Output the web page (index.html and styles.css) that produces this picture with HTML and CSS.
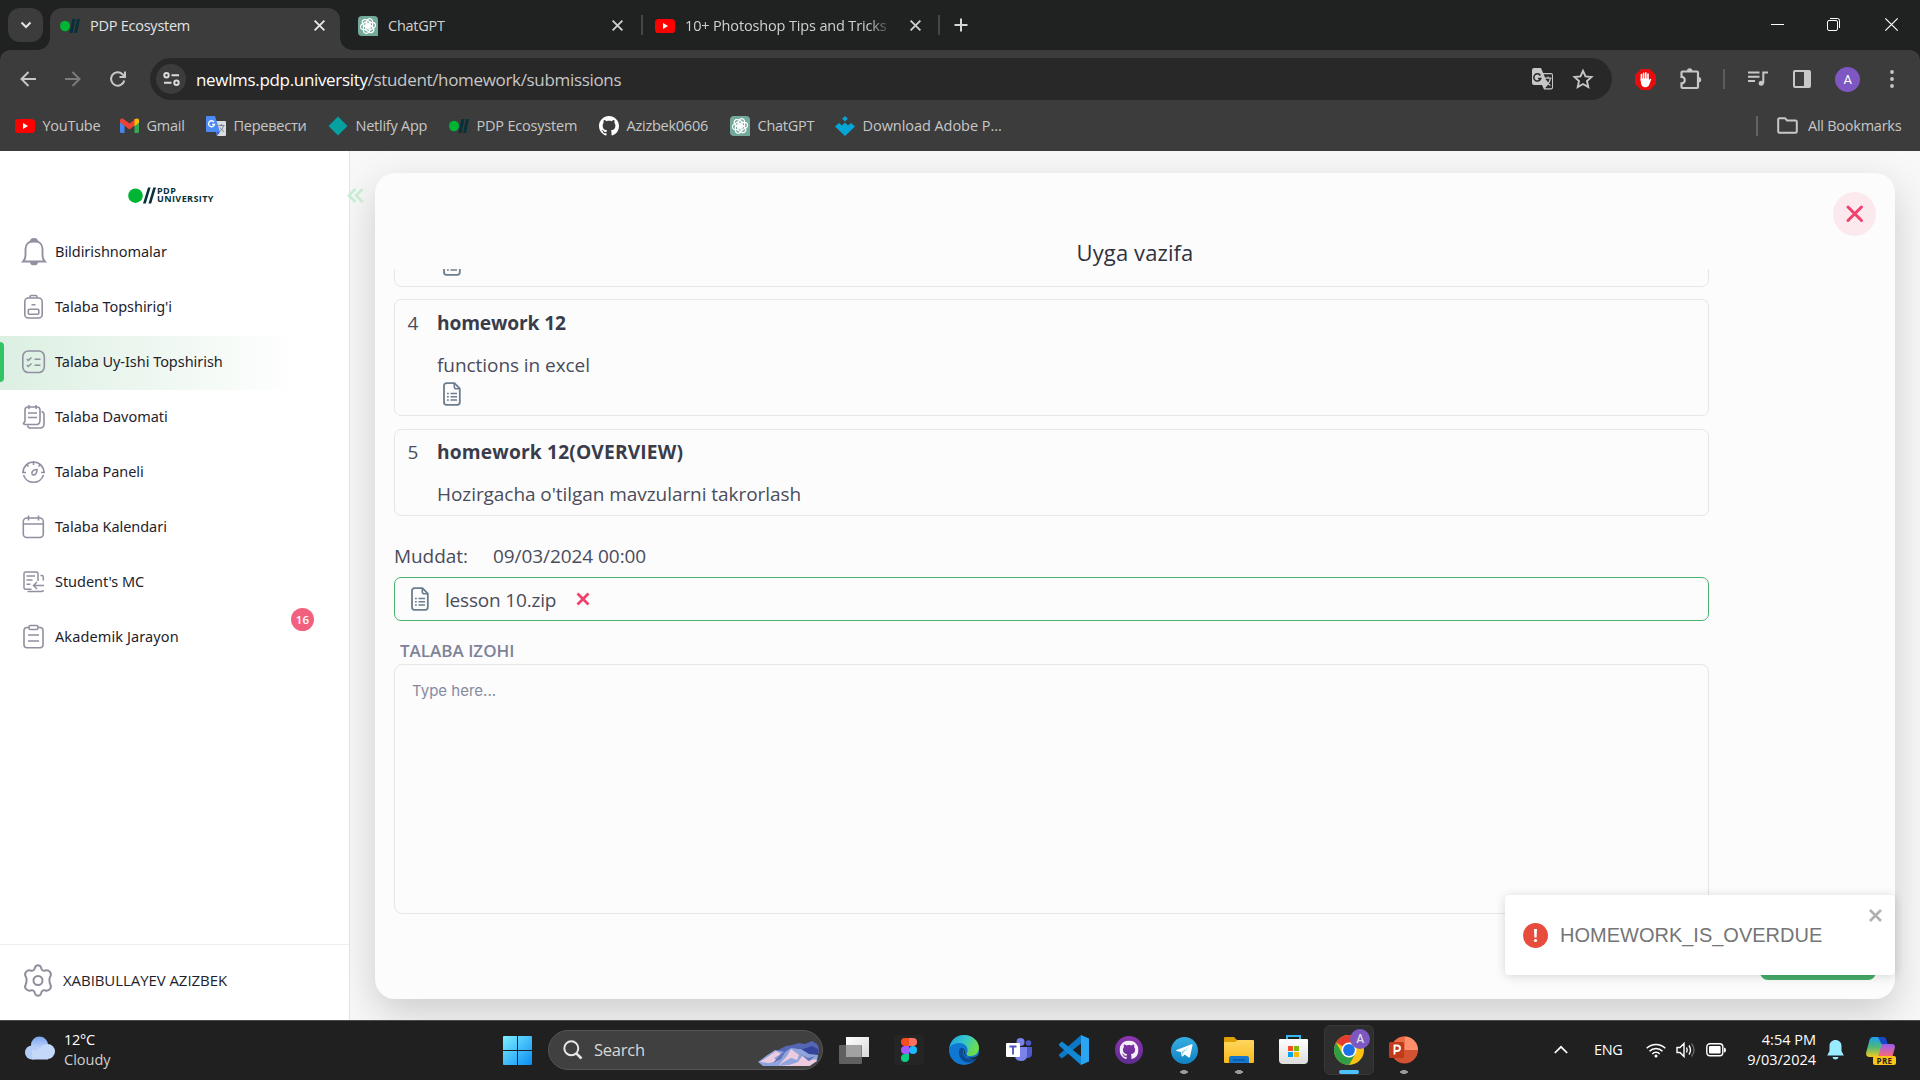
FILE: index.html
```html
<!DOCTYPE html>
<html lang="uz">
<head>
<meta charset="utf-8">
<title>PDP Ecosystem</title>
<link rel="stylesheet" href="styles.css">
</head>
<body>
<svg class="defs" width="0" height="0" aria-hidden="true">
  <defs>
    <linearGradient id="gStart" x1="0" y1="0" x2="1" y2="1"><stop offset="0" stop-color="#7df0ff"/><stop offset="1" stop-color="#0a8cf5"/></linearGradient>
    <linearGradient id="gCloud" x1="0" y1="0" x2="0" y2="1"><stop offset="0" stop-color="#7aa5f0"/><stop offset="1" stop-color="#dce9fc"/></linearGradient>
    <linearGradient id="gEdge" x1="0" y1="0" x2="1" y2="0.4"><stop offset="0" stop-color="#1b9de2"/><stop offset=".55" stop-color="#35c8c8"/><stop offset="1" stop-color="#6ddb4a"/></linearGradient>
    <linearGradient id="gFolder" x1="0" y1="0" x2="0" y2="1"><stop offset="0" stop-color="#ffd75e"/><stop offset="1" stop-color="#f7b81c"/></linearGradient>
    <linearGradient id="gTg" x1="0" y1="0" x2="0" y2="1"><stop offset="0" stop-color="#37aee2"/><stop offset="1" stop-color="#0f83c3"/></linearGradient>
    <linearGradient id="gGh" x1="0" y1="0" x2="0" y2="1"><stop offset="0" stop-color="#8d35b0"/><stop offset="1" stop-color="#5f2c8f"/></linearGradient>
    <linearGradient id="gBag" x1="0" y1="0" x2="0" y2="1"><stop offset="0" stop-color="#fff"/><stop offset="1" stop-color="#dcdcdc"/></linearGradient>
    <linearGradient id="gCopA" x1="0" y1="0" x2="0" y2="1"><stop offset="0" stop-color="#1aa0f0"/><stop offset=".5" stop-color="#4fb878"/><stop offset="1" stop-color="#f2cc20"/></linearGradient>
    <linearGradient id="gCopB" x1="0" y1="0" x2="0" y2="1"><stop offset="0" stop-color="#9a5cf0"/><stop offset="1" stop-color="#ff6a70"/></linearGradient>
    <linearGradient id="gTask" x1="0" y1="0" x2="1" y2="1"><stop offset="0" stop-color="#fff"/><stop offset="1" stop-color="#d8d8d8"/></linearGradient>
    <symbol id="pdp" viewBox="0 0 20 16"><ellipse cx="5" cy="8" rx="5" ry="5.2" fill="#00b533"/><path d="M9.5 15 12.5 1h3l-3 14zM14 15l3-14h3l-3 14z" fill="#06303a"/></symbol>
    <symbol id="gpt" viewBox="0 0 20 20"><path d="M4 0h12a4 4 0 0 1 4 4v16H4a4 4 0 0 1-4-4V4a4 4 0 0 1 4-4z" fill="#74aa9c"/><g fill="none" stroke="#fff" stroke-width="1.2"><path id="petal" d="M10 3.2c2-1.4 4.6.1 4.6 2.5v4.2l-3.3 1.9-3.2-1.9V6.2z"/><use href="#petal" transform="rotate(60 10 10)"/><use href="#petal" transform="rotate(120 10 10)"/><use href="#petal" transform="rotate(180 10 10)"/><use href="#petal" transform="rotate(240 10 10)"/><use href="#petal" transform="rotate(300 10 10)"/></g></symbol>
    <symbol id="yt" viewBox="0 0 20 14"><rect width="20" height="14" rx="3.6" fill="#f00"/><path d="M8 4v6l5-3z" fill="#fff"/></symbol>
    <symbol id="x" viewBox="0 0 12 12"><path d="M1.5 1.5l9 9m0-9l-9 9" fill="none" stroke="currentColor" stroke-width="1.7"/></symbol>
    <symbol id="octo" viewBox="0 0 16 16"><path d="M8 0C3.58 0 0 3.58 0 8c0 3.54 2.29 6.53 5.47 7.59.4.07.55-.17.55-.38 0-.19-.01-.82-.01-1.49-2.01.37-2.53-.49-2.69-.94-.09-.23-.48-.94-.82-1.13-.28-.15-.68-.52-.01-.53.63-.01 1.08.58 1.23.82.72 1.21 1.87.87 2.33.66.07-.52.28-.87.51-1.07-1.78-.2-3.64-.89-3.64-3.95 0-.87.31-1.59.82-2.15-.08-.2-.36-1.02.08-2.12 0 0 .67-.21 2.2.82.64-.18 1.32-.27 2-.27s1.36.09 2 .27c1.53-1.04 2.2-.82 2.2-.82.44 1.1.16 1.92.08 2.12.51.56.82 1.27.82 2.15 0 3.07-1.87 3.75-3.65 3.95.29.25.54.73.54 1.48 0 1.07-.01 1.93-.01 2.2 0 .21.15.46.55.38A8.01 8.01 0 0 0 16 8c0-4.42-3.58-8-8-8z"/></symbol>
    <symbol id="doc" viewBox="0 0 18 24"><path d="M3.5 1.2h8l5.3 5.3v13.8a2.5 2.5 0 0 1-2.5 2.5H3.5A2.5 2.5 0 0 1 1 20.300V3.700a2.500 2.500 0 0 1 2.500-2.500z" fill="none" stroke="#6b7d8e" stroke-width="1.800"/><path d="M11.300 1.500v3.300a2 2 0 0 0 2 2h3.200" fill="none" stroke="#6b7d8e" stroke-width="1.600"/><path d="M4 11.500h1.800M7.500 11.500h6.500M4 14.800h1.800M7.500 14.800h6.500M4 18h1.800M7.500 18h6.500" stroke="#6b7d8e" stroke-width="1.600"/></symbol>
  </defs>
</svg>

<header class="tabs">
  <button class="tab-search"><svg width="12" height="8" viewBox="0 0 12 8"><path d="M1.500 1.500 6 6l4.500-4.500" fill="none" stroke="#e3e3e3" stroke-width="2"/></svg></button>
  <div class="tab active"><svg width="20" height="16"><use href="#pdp"/></svg><span>PDP Ecosystem</span><svg class="tx" width="13" height="13"><use href="#x"/></svg></div>
  <div class="tab second"><svg width="20" height="20"><use href="#gpt"/></svg><span>ChatGPT</span><svg class="tx" width="13" height="13"><use href="#x"/></svg></div>
  <i class="tsep"></i>
  <div class="tab third"><svg width="20" height="14"><use href="#yt"/></svg><span class="fade">10+ Photoshop Tips and Tricks |</span><svg class="tx" width="13" height="13"><use href="#x"/></svg></div>
  <i class="tsep"></i>
  <svg class="plus" width="14" height="14" viewBox="0 0 14 14"><path d="M7 .5v13M.5 7h13" stroke="#d6d6d6" stroke-width="2"/></svg>
  <div class="winctl">
    <svg width="13" height="13" viewBox="0 0 13 13"><path d="M0 6.500h13" stroke="#fff"/></svg>
    <svg width="13" height="13" viewBox="0 0 13 13" fill="none" stroke="#fff"><rect x=".5" y="2.500" width="10" height="10" rx="1.500"/><path d="M3 .500h7.500a2 2 0 0 1 2 2V10"/></svg>
    <svg width="13" height="13" viewBox="0 0 13 13"><path d="M.3.3l12.400 12.400m0-12.400L.3 12.700" stroke="#fff" stroke-width="1.200"/></svg>
  </div>
</header>

<div class="toolbar">
  <nav class="navbtns">
    <svg width="16" height="16" viewBox="0 0 16 16" fill="none" stroke="#c7c7c7" stroke-width="2"><path d="M16 8H1.500M8.500 1 1.500 8l7 7"/></svg>
    <svg width="16" height="16" viewBox="0 0 16 16" fill="none" stroke="#7b7b7b" stroke-width="2"><path d="M0 8h14.500M7.500 1l7 7-7 7"/></svg>
    <svg width="16" height="16" viewBox="0 0 16 16" fill="none" stroke="#c7c7c7" stroke-width="2"><path d="M14.300 9.500A6.700 6.700 0 1 1 12.500 3.200L15 5.500M15 .5v5.500H9.500"/></svg>
  </nav>
  <div class="omni">
    <span class="chip"><svg width="17" height="14" viewBox="0 0 17 14" fill="none" stroke="#dcdcdc" stroke-width="2"><circle cx="3.500" cy="3.200" r="2.200"/><path d="M8.500 3.200H16M1 10.800h7.500"/><circle cx="13.500" cy="10.800" r="2.200"/></svg></span>
    <span class="url">newlms.pdp.university<em>/student/homework/submissions</em></span>
    <svg class="tr" width="22" height="22" viewBox="0 0 22 22"><path d="M2 0h7l2.200 5H19a2 2 0 0 1 2 2v12.500a2 2 0 0 1-2 2h-7L10 17H2a2 2 0 0 1-2-2V2a2 2 0 0 1 2-2z" fill="#c7c7c7"/><path d="M11.700 6.200H19q1 0 1 1v12q0 1-1 1h-6l3-3.400z" fill="#2a2a2a"/><path d="M8.400 7.500a3.600 3.600 0 1 0 .4 3H6" fill="none" stroke="#282828" stroke-width="1.500"/><path d="M12.500 10.200h7M16 8.500v1.700M13.500 17.500c3-1.500 4.500-4 4.800-7.300M14 12.500c.8 2 2.500 4 4.500 5" fill="none" stroke="#c7c7c7" stroke-width="1.300"/></svg>
    <svg class="star" width="20" height="20" viewBox="0 0 20 20"><path d="M10 1.800l2.500 5.600 6 .6-4.500 4.100 1.300 6L10 15l-5.300 3.100 1.300-6L1.500 8l6-.6z" fill="none" stroke="#c7c7c7" stroke-width="1.900"/></svg>
  </div>
  <div class="exts">
    <svg width="21" height="21" viewBox="0 0 21 21"><path d="M6.200 0h8.600L21 6.200v8.600L14.800 21H6.200L0 14.800V6.200z" fill="#e80c0c"/><path d="M6.400 5.500v6M8.600 4.200v7M10.800 3.800v7M13 5v7" stroke="#fff" stroke-width="1.600" stroke-linecap="round"/><path d="M5.600 9.500h8.200v2.300l1-1.800q1-.7 1.500.2L14.500 15q-1 3.200-4.200 3.200-3.600 0-4.300-3.700z" fill="#fff"/></svg>
    <svg class="puz" width="22" height="22" viewBox="0 0 22 22"><path d="M2.500 3.500H17a1 1 0 0 1 1 1V19a1 1 0 0 1-1 1H2.500a1 1 0 0 1-1-1v-3.600a3.300 3.300 0 0 0 0-6.600V4.500a1 1 0 0 1 1-1z" fill="none" stroke="#c7c7c7" stroke-width="2.200"/><path d="M7 3a2.700 2.700 0 0 1 5.400 0zM18.500 9a2.700 2.700 0 0 1 0 5.400z" fill="#c7c7c7"/></svg>
    <i class="vsep"></i>
    <svg class="mus" width="20" height="16" viewBox="0 0 20 16" fill="none" stroke="#c7c7c7" stroke-width="2"><path d="M0 1.500h11.500M0 5.700h11.500M0 9.900h7M15.300 12.300V1.500H20"/><circle cx="13.200" cy="12.300" r="2.500" fill="#c7c7c7" stroke="none"/></svg>
    <svg class="side" width="18" height="18" viewBox="0 0 18 18"><rect x="1" y="1" width="16" height="16" rx="1" fill="none" stroke="#c7c7c7" stroke-width="2"/><path d="M11 1h6v16h-6z" fill="#c7c7c7"/></svg>
    <span class="avatar">A</span>
    <svg class="dots" width="4" height="18" viewBox="0 0 4 18" fill="#c7c7c7"><circle cx="2" cy="2" r="1.900"/><circle cx="2" cy="9" r="1.900"/><circle cx="2" cy="16" r="1.900"/></svg>
  </div>
</div>

<div class="bookmarks">
  <a><svg width="20" height="14"><use href="#yt"/></svg>YouTube</a>
  <a><svg width="19" height="15" viewBox="0 0 19 15"><path d="M0 2v12a1 1 0 0 0 1 1h3.500V6z" fill="#4285f4"/><path d="M19 2v12a1 1 0 0 1-1 1h-3.500V6z" fill="#34a853"/><path d="M14.500 1.300 19 2v2.500L14.500 8z" fill="#fbbc04"/><path d="M0 2.500C0 .3 2 0 3.500 1l6 4.500 6-4.500-1 6.700-5 3.800-5-3.800L0 4.500z" fill="#ea4335"/><path d="M14.500 1.500C17-.5 19 .5 19 2.500v2L14.500 8z" fill="#fbbc04"/></svg>Gmail</a>
  <a><svg width="20" height="20" viewBox="0 0 20 20"><path d="M8 5h11a1 1 0 0 1 1 1v13a1 1 0 0 1-1 1h-8z" fill="#dadce0"/><path d="M1 0h8l5 16H1a1 1 0 0 1-1-1V1a1 1 0 0 1 1-1z" fill="#4c8bf5"/><path d="M11 20l3-4h-4z" fill="#3367d6"/><path d="M8 6a3 3 0 1 0 .5 2.300H6" fill="none" stroke="#fff" stroke-width="1.300"/><path d="M12.500 9.500h6M15.500 8v1.500M13.500 15.500c2-1 3.500-3 3.800-6M14 11.500c.8 1.500 2 3 4 4" fill="none" stroke="#7a8591"/></svg>Перевести</a>
  <a><svg width="20" height="20" viewBox="0 0 20 20"><path d="M10 .5 19.500 10 10 19.500.5 10z" fill="#05a0a0"/></svg>Netlify App</a>
  <a><svg width="20" height="16"><use href="#pdp"/></svg>PDP Ecosystem</a>
  <a><svg width="20" height="20" fill="#fff"><use href="#octo"/></svg>Azizbek0606</a>
  <a><svg width="20" height="20"><use href="#gpt"/></svg>ChatGPT</a>
  <a><svg width="20" height="20" viewBox="0 0 20 20" fill="#04a6d8"><path d="M10 0l2.800 2.800L10 5.600 7.200 2.800zM10 20 0 10.500 4 7l3 2.500 3-3 3 3L16 7l4 3.500z"/></svg>Download Adobe P...</a>
  <i class="bsep"></i>
  <a><svg width="21" height="17" viewBox="0 0 21 17"><path d="M2.500 1.200H8l2 2.300h8.500a1.300 1.300 0 0 1 1.300 1.300v9.700a1.300 1.300 0 0 1-1.300 1.300h-16a1.300 1.300 0 0 1-1.300-1.300v-12a1.300 1.300 0 0 1 1.300-1.300z" fill="none" stroke="#c7c7c7" stroke-width="2"/></svg>All Bookmarks</a>
</div>

<div class="app">
  <aside class="sidebar">
    <div class="logo"><svg width="28" height="17" viewBox="0 0 28 17"><circle cx="7.500" cy="8.700" r="7.300" fill="#00b533"/><path d="M15 16.500 20 .500h2.600l-4.800 16zM20.500 16.500l4.800-16H28l-4.800 16z" fill="#06303a"/></svg><b>PDP<br>UNIVERSITY</b></div>
    <ul class="menu">
      <li><svg width="24" height="28" viewBox="0 0 24 28" fill="none" stroke="#9090a0" stroke-width="1.900"><path d="M1.200 23.500c1.600-1.600 2.300-3.300 2.300-6V11C3.500 6 7 3 12 3s8.500 3 8.500 8v6.500c0 2.700.7 4.400 2.300 6z"/><path d="M9 3.500C9 .2 15 .2 15 3.500zM9 24.500h6c-.5 2.500-5.500 2.500-6 0z" fill="#9090a0"/></svg>Bildirishnomalar</li>
      <li><svg width="24" height="28" viewBox="0 0 24 28" fill="none" stroke="#9090a0" stroke-width="1.600"><rect x="2.800" y="5" width="17.400" height="20" rx="3.500"/><path d="M8 5V3.800q0-1.300 1.300-1.300h4.400Q15 2.500 15 3.800V5M9.500 11.800h4"/><rect x="6.300" y="16.300" width="10.500" height="5" rx="1"/></svg>Talaba Topshirig'i</li>
      <li class="current"><svg width="24" height="28" viewBox="0 0 24 28" fill="none" stroke="#9090a0" stroke-width="1.600"><rect x=".8" y="3" width="21.500" height="21.500" rx="5.500"/><path d="M12.500 11.300h6M12.500 17.300h6M4.800 11l1.500 1.500 3.200-3M4.800 17l1.500 1.500 3.200-3"/></svg>Talaba Uy-Ishi Topshirish</li>
      <li><svg width="24" height="28" viewBox="0 0 24 28" fill="none" stroke="#9090a0" stroke-width="1.600"><path d="M3 18V7q0-3 3-3h9q3 0 3 3v10c0 3-1 4.500-3.500 4.500h-11c-2.300 0-2.500-1.500-1.300-2z"/><path d="M7 2v4M14 2v4M6 10h9M6 14.500h9M19.500 8.500q2.500.5 2.500 3V21q0 4-4 4H8.500q-2.500 0-3-2.500"/></svg>Talaba Davomati</li>
      <li><svg width="24" height="28" viewBox="0 0 24 28" fill="none" stroke="#9090a0" stroke-width="1.600"><path d="M1 14.500a10.500 10.500 0 1 1 21 0M1.500 17a10.500 10.500 0 0 0 20 0M0 14.500h4M19 14.500h4M11.500 3v4M4.500 6.500l2 2M18.500 6.500l-2 2"/><path d="M15 11.500c-2.500 0-6 1.500-5 4.500 1 1.500 3 1 4-.5.700-1.200 1-2.500 1-4z"/></svg>Talaba Paneli</li>
      <li><svg width="24" height="28" viewBox="0 0 24 28" fill="none" stroke="#9090a0" stroke-width="1.600"><rect x="1.300" y="5" width="20" height="19.500" rx="3.500"/><path d="M1.500 11h20M6.500 2.500v5M16.500 2.500v5"/></svg>Talaba Kalendari</li>
      <li><svg width="24" height="28" viewBox="0 0 24 28" fill="none" stroke="#9090a0" stroke-width="1.500"><path d="M9.500 21.300H3.500q-1.500 0-1.500-1.500V5.500Q2 4 3.500 4h11Q16 4 16 5.500V13M4.500 8h8.500M4.500 12h6M4.500 16.300h4M18.500 7.500h1.300q1.500 0 1.500 1.500v3.500M5.500 23.500h14q1.800 0 1.800-1.500M22 17.500H12M15 14l-3.500 3.500L15 21"/></svg>Student's MC</li>
      <li><svg width="24" height="28" viewBox="0 0 24 28" fill="none" stroke="#9090a0" stroke-width="1.600"><path d="M7 4.500H5Q2 4.500 2 7.500v14.300q0 3 3 3h13q3 0 3-3V7.500q0-3-3-3h-2"/><rect x="7" y="2.500" width="9" height="4" rx="1.500"/><path d="M6 12h11M6 18h11"/></svg>Akademik Jarayon<span class="badge">16</span></li>
    </ul>
    <div class="user"><svg width="30" height="33" viewBox="0 0 30 33" fill="none" stroke="#8e8e9c" stroke-width="2"><path d="M12 3.500c1-3 5-3 6 0 .7 2.700 1.500 3.700 4.500 3 3.500-.8 6.500 2.500 5 5.500-1.200 2.200-1.200 6.300 0 9 1.500 3-1.500 6.300-5 5.500-3-.7-3.800.3-4.500 3-1 3-5 3-6 0-.7-2.700-1.500-3.700-4.500-3-3.500.8-6.500-2.500-5-5.500 1.200-2.700 1.200-6.800 0-9-1.500-3 1.500-6.300 5-5.500 3 .7 3.800-.3 4.500-3z"/><circle cx="15" cy="16.500" r="4.500"/></svg><span>XABIBULLAYEV AZIZBEK</span></div>
  </aside>
  <main class="content">
    <svg class="collapse" width="17" height="15" viewBox="0 0 17 15" fill="none" stroke="#c8ecd4" stroke-width="2.800"><path d="M8.500 1 2 7.500 8.500 14M15.700 1 9.200 7.500l6.500 6.500"/></svg>
    <section class="modal">
      <div class="modal-top"><button class="close"><svg width="18" height="18" viewBox="0 0 18 18"><path d="M2 2l13.500 13.500M15.500 2 2 15.500" stroke="#f1416c" stroke-width="3" stroke-linecap="round"/></svg></button></div>
      <h1>Uyga vazifa</h1>
      <div class="scroll">
        <article class="card cut"><svg width="18" height="24"><use href="#doc"/></svg></article>
        <article class="card tall"><span class="no">4</span><div><h2>homework 12</h2><p>functions in excel</p><svg width="18" height="24"><use href="#doc"/></svg></div></article>
        <article class="card"><span class="no">5</span><div><h2 class="wide">homework 12(OVERVIEW)</h2><p>Hozirgacha o'tilgan mavzularni takrorlash</p></div></article>
        <div class="due"><span>Muddat:</span><time>09/03/2024 00:00</time></div>
        <div class="file"><svg width="18" height="24"><use href="#doc"/></svg><span>lesson 10.zip</span><svg class="rm" width="14" height="14" viewBox="0 0 14 14"><path d="M1.500 1.500l11 11M12.500 1.500l-11 11" stroke="#f1416c" stroke-width="2.800"/></svg></div>
        <label class="lab">TALABA IZOHI</label>
        <div class="area">Type here...</div>
        <div class="actions"><button class="submit"></button></div>
      </div>
    </section>
    <div class="toast">
      <svg width="25" height="25" viewBox="0 0 25 25"><circle cx="12.500" cy="12.500" r="12.500" fill="#e74c3c"/><path d="M11 6h3l-.4 8.500h-2.200z" fill="#fff"/><circle cx="12.500" cy="17.500" r="1.600" fill="#fff"/></svg>
      <span>HOMEWORK_IS_OVERDUE</span>
      <svg class="tclose" width="13" height="13" viewBox="0 0 13 13"><path d="M1 1l11 11M12 1 1 12" stroke="#b0b0b0" stroke-width="2.600"/></svg>
    </div>
  </main>
</div>

<footer class="taskbar">
  <div class="weather">
    <svg width="30" height="24" viewBox="0 0 30 24"><circle cx="14.500" cy="9" r="8.500" fill="url(#gCloud)"/><circle cx="7" cy="16.500" r="7" fill="#b4cdf7"/><circle cx="22.500" cy="15.500" r="7.500" fill="#c4d8fa"/><path d="M7 14h16v9.500H7z" fill="#c4d8fa"/></svg>
    <div>12°C<small>Cloudy</small></div>
  </div>
  <div class="apps">
    <svg class="a-start" width="29" height="29" viewBox="0 0 29 29"><path d="M0 1q0-1 1-1h13v14H0zM15 0h13q1 0 1 1v13H15zM0 15h14v14H1q-1 0-1-1zM15 15h14v13q0 1-1 1H15z" fill="url(#gStart)"/></svg>
    <div class="search"><svg width="20" height="20" viewBox="0 0 20 20" fill="none" stroke="#e8e8e8" stroke-width="2"><circle cx="8.300" cy="8.300" r="7"/><path d="M13.300 13.300 18.500 18.500" stroke-width="2.600"/></svg><span>Search</span>
      <svg class="mount" width="62" height="26" viewBox="0 0 62 26"><path d="M20 9 28 5l6-1 7-2 6 1 7-3 5 3q3 4 1 11l-4 5-46 3z" fill="#5566b4"/><path d="M38 7l7 1 9-3 6 3v6l-16 4z" fill="#34449a"/><path d="M0 21l8-6 9-6 10 2 6-4 10 1 8 5 9 1-1 6-7 5H5z" fill="#8fa3dc"/><path d="M2 21l9-6 7-5 5 3-7 4 4 3-9 2zM33 8l8 6-2 5-6-2-9 5-2 2h9l9-3 5-7 5 6 7-2 2 2-8 5H30l-9-1 8-9z" fill="#eccbe0"/><path d="M24 12l4-2-5 8-8 4 5-6zM42 13l8 4 7-2-6 5z" fill="#5f74bb"/></svg></div>
    <svg class="a-tv" width="30" height="29" viewBox="0 0 30 29"><rect x="7" y="1" width="23" height="20" fill="url(#gTask)"/><rect x="0" y="9" width="23" height="19" rx="1" fill="#606060"/><path d="M7 9h15.500v12H7z" fill="#a2a2a2"/></svg>
    <span class="a-figma"><svg width="16" height="24" viewBox="0 0 16 24"><path d="M4 0h4v8H4a4 4 0 0 1 0-8z" fill="#f24e1e"/><path d="M8 0h4a4 4 0 0 1 0 8H8z" fill="#ff7262"/><path d="M4 8h4v8H4a4 4 0 0 1 0-8z" fill="#a259ff"/><circle cx="12" cy="12" r="4" fill="#1abcfe"/><path d="M4 16h4v4a4 4 0 1 1-4-4z" fill="#0acf83"/></svg></span>
    <svg class="a-edge" width="30" height="30" viewBox="0 0 30 30"><circle cx="15" cy="15" r="15" fill="#0f78d2"/><path d="M.5 13C1.500 5 7.500 0 15 0c8.500 0 15 6 15 13 0 5-4 8-8.500 8-3.500 0-4.500-1.500-3.500-3 1.500-2 1-9-6.500-10C6 7.500 2 10 .5 13z" fill="url(#gEdge)"/><path d="M10.500 14c-2.500 7 3 14.500 10.500 13.500 2.500-.5 5-2 6.500-4.500C21 25.500 14 23 14 17.500c0-1.500.7-2.500 1.500-3.500-1.500-1.500-4-1.500-5 0z" fill="#0b4a94"/><path d="M16 14.500c-1.500 1.500-1.500 4.500 1 6.500 3 2.300 8 2 11.500-.5l1 .5q-.5 1.500-1.500 2.800c-6 2-13.500-2.500-12-9.300z" fill="#202020" opacity=".85"/></svg>
    <svg class="a-teams" width="27" height="24" viewBox="0 0 27 24"><circle cx="14.500" cy="4" r="4" fill="#7b83eb"/><circle cx="22.500" cy="5" r="2.800" fill="#5059c9"/><path d="M19 9h7v7q0 4-5 4h-2z" fill="#5059c9"/><path d="M9 9h12v8q0 6-6 6t-6-6z" fill="#7b83eb"/><rect y="5" width="14" height="14" rx="1" fill="#fff"/><path d="M3.500 8.500h7M7 8.500v8" stroke="#4b53bc" stroke-width="1.800"/></svg>
    <svg class="a-code" width="30" height="30" viewBox="0 0 30 30"><path d="M22 0l8 3.500v23L22 30z" fill="#29a5f2"/><path d="M22 0v8.500L3 23.500 0 21v-1.500z" fill="#0a78c4"/><path d="M22 30v-8.500L3 6.500 0 9v1.500z" fill="#1287d6"/></svg>
    <svg class="a-gh" width="28" height="28" viewBox="0 0 28 28"><circle cx="14" cy="14" r="14" fill="url(#gGh)"/><svg x="4.500" y="4.500" width="19" height="19" fill="#f3eef7"><use href="#octo"/></svg></svg>
    <svg class="a-tg" width="27" height="27" viewBox="0 0 27 27"><circle cx="13.500" cy="13.500" r="13.500" fill="url(#gTg)"/><path d="M5.500 13 20.500 7.200c.8-.2 1.200.3 1 1l-2.500 11.600c-.2.900-.9 1-1.600.5l-3.700-2.800-2 1.900c-.4.400-.9.200-1-.3l-.9-4-4.300-1.200c-.6-.3-.6-.6 0-.9z" fill="#fff"/><path d="M10.200 15 17.500 10l-5.500 6.500v2.500z" fill="#a9d3ec"/></svg>
    <svg class="a-exp" width="30" height="26" viewBox="0 0 30 26"><path d="M0 1q0-1 1-1h9l3 3h16v8H0z" fill="#e0a106"/><path d="M0 5h11l3-2h15q1 0 1 1v21q0 1-1 1H1q-1 0-1-1z" fill="url(#gFolder)"/><path d="M5 26v-5q0-2 2-2h16q2 0 2 2v5z" fill="#1378cd"/><path d="M9 23h12" stroke="#0a4d96" stroke-width="1.200"/></svg>
    <svg class="a-store" width="29" height="29" viewBox="0 0 29 29"><path d="M8 7V1h13v6" fill="none" stroke="#35b6ee" stroke-width="2"/><path d="M0 5q0-1 1-1h27q1 0 1 1v20q0 4-4 4H4q-4 0-4-4z" fill="url(#gBag)"/><path d="M9 11h5v5H9z" fill="#f25022"/><path d="M15 11h5v5h-5z" fill="#7fba00"/><path d="M9 17h5v5H9z" fill="#00a4ef"/><path d="M15 17h5v5h-5z" fill="#ffb900"/></svg>
    <span class="a-chrome"><svg width="30" height="30" viewBox="0 0 30 30"><circle cx="15" cy="15" r="15" fill="#fbc116"/><path d="M15 15 2 7.500A15 15 0 0 1 28 7.500H15z" fill="#e33b2e"/><path d="M2 7.500A15 15 0 0 0 15 30l6.500-11.200L15 15 8.500 18.800z" fill="#2f9e44"/><circle cx="15" cy="15" r="7.500" fill="#fff"/><circle cx="15" cy="15" r="5.900" fill="#1a73e8"/></svg><b>A</b></span>
    <svg class="a-pp" width="29" height="28" viewBox="0 0 29 28"><circle cx="15.500" cy="14" r="13.500" fill="#d35230"/><path d="M15.500.5A13.500 13.500 0 0 1 29 14H15.500z" fill="#ff8f6b"/><path d="M15.500.5V14H2A13.500 13.500 0 0 1 15.500.5z" fill="#ed6c47"/><rect y="6" width="15" height="16" rx="1.500" fill="#c13b1b"/><path d="M5.500 18.500v-9H8q3 0 3 2.700T8 15H5.500" fill="none" stroke="#fff" stroke-width="1.900"/></svg>
  </div>
  <div class="tray">
    <svg class="chev" width="14" height="9" viewBox="0 0 14 9"><path d="M.8 8 7 1.800 13.200 8" fill="none" stroke="#fff" stroke-width="1.700"/></svg>
    <span class="eng">ENG</span>
    <svg class="wifi" width="20" height="16" viewBox="0 0 20 16" fill="none" stroke="#fff" stroke-width="1.500"><path d="M.7 6.300a13 13 0 0 1 18.600 0M3.500 9.200a9 9 0 0 1 13 0M6.300 12a5 5 0 0 1 7.400 0"/><circle cx="10" cy="14" r="1.500" fill="#fff" stroke="none"/></svg>
    <svg class="spk" width="20" height="16" viewBox="0 0 20 16" fill="none" stroke="#fff" stroke-width="1.400"><path d="M1 5.500h3L8 1.500v13l-4-4H1zM10.500 5.500q1.500 2.500 0 5M13 3.500q3 4.500 0 9"/><path d="M15.500 1.500q5 6.500 0 13" stroke="#666"/></svg>
    <svg class="bat" width="20" height="14" viewBox="0 0 20 14"><rect x=".8" y=".8" width="16" height="12" rx="3" fill="none" stroke="#fff" stroke-width="1.400"/><rect x="3" y="3" width="11.600" height="7.600" rx="1" fill="#fff"/><path d="M18 4.500q2 0 2 2.500t-2 2.500z" fill="#fff"/></svg>
    <div class="clock">4:54 PM<br>9/03/2024</div>
    <svg class="bell" width="17" height="20" viewBox="0 0 17 20" fill="#99ebff"><path d="M8.500 0C12 0 14.500 2.500 14.500 6v5l2.300 4.500H.2L2.500 11V6C2.500 2.500 5 0 8.500 0zM5.500 17h6q-.5 2.500-3 2.500t-3-2.500z"/></svg>
    <span class="copilot"><svg width="29" height="24" viewBox="0 0 29 24"><path d="M7 0h10q2 0 1.500 2L14 17q-.8 3-4 3H4q-5 0-3.700-5L3.500 3Q4.500 0 7 0z" fill="url(#gCopA)"/><path d="M12 0h5q3 0 3.500 3l1 4h-6z" fill="#1746c8"/><path d="M18 7h8q3.500 0 2.800 4l-2.500 9H12l3-10q1-3 3-3z" fill="url(#gCopB)"/></svg><b>PRE</b></span>
  </div>
</footer>
</body>
</html>
```
FILE: styles.css
```css
* { box-sizing: border-box; }
body {
  margin: 0; width: 1920px; height: 1080px; overflow: hidden;
  display: flex; flex-direction: column;
  font: 14.5px/20px "Open Sans", "Noto Sans", sans-serif;
  letter-spacing: -.25px; background: #202222;
}
.defs { position: absolute; }
svg { display: block; flex: none; overflow: visible; }
button { border: 0; padding: 0; background: none; font: inherit; }

/* tab strip */
.tabs { height: 50px; flex: none; background: #202222; display: flex; align-items: center; color: #d0d0d0; padding-left: 8px; }
.tab-search { width: 35px; height: 34px; border-radius: 12px; background: #3c3c3c; display: flex; align-items: center; justify-content: center; }
.tab { display: flex; align-items: center; height: 42px; white-space: nowrap; }
.tab span { margin-left: 10px; flex: 1; }
.tx { color: #d0d0d0; }
.tab.active { position: relative; align-self: flex-end; margin-left: 7px; width: 290px; padding: 0 14px 7px 10px; background: #3c3c3c; color: #e3e3e3; border-radius: 12px 12px 0 0; }
.active .tx { color: #e8e8e8; }
.tab.active::before, .tab.active::after { content: ""; position: absolute; bottom: 0; width: 12px; height: 12px; }
.tab.active::before { left: -12px; background: radial-gradient(circle at 0 0, transparent 11.5px, #3c3c3c 12px); }
.tab.active::after { right: -12px; background: radial-gradient(circle at 100% 0, transparent 11.5px, #3c3c3c 12px); }
.second { width: 266px; margin-left: 18px; padding-top: 1px; }
.tsep { width: 2px; height: 20px; background: #454747; margin-left: 17px; }
.third { width: 267px; margin-left: 12px; padding-top: 1px; }
.tab .fade { margin-right: 16px; min-width: 0; letter-spacing: -.15px; -webkit-mask-image: linear-gradient(90deg, #000 85%, transparent); mask-image: linear-gradient(90deg, #000 88%, transparent); }
.third + .tsep { margin-left: 16px; }
.plus { margin-left: 14px; }
.winctl { margin-left: auto; display: flex; gap: 43px; padding: 0 22px 2px 0; }
.winctl svg:last-child { margin-left: 2px; }

/* toolbar */
.toolbar { height: 58px; flex: none; background: #3c3c3c; border-radius: 10px 10px 0 0; display: flex; align-items: center; padding-left: 20px; }
.navbtns { display: flex; gap: 29px; }
.omni { margin-left: 24px; width: 1462px; height: 42px; border-radius: 21px; background: #282828; display: flex; align-items: center; padding: 0 19px 0 6px; }
.chip { width: 30px; height: 30px; border-radius: 15px; background: #3c3c3c; display: flex; align-items: center; justify-content: center; }
.url { flex: 1; margin-left: 10px; padding-top: 1px; font-size: 17px; letter-spacing: -.33px; color: #fff; }
.url em { font-style: normal; color: #c7c7c7; }
.star { margin-left: 19px; }
.exts { flex: 1; display: flex; align-items: center; margin-left: 23px; }
.puz { margin-left: 24px; }
.vsep { width: 2px; height: 20px; margin-left: 21px; background: #5c5c5c; }
.mus { margin-left: 23px; }
.side { margin-left: 25px; }
.avatar { margin-left: 24px; width: 25px; height: 25px; border-radius: 50%; background: #7e57c2; color: #fff; font: 13px/25px Roboto, sans-serif; text-align: center; }
.dots { margin-left: 30px; }

/* bookmarks */
.bookmarks { height: 43px; flex: none; background: #3c3c3c; color: #c7c7c7; display: grid; grid-template-columns: 105px 86px 122px 121px 150px 131px 105px 921px 21px 1fr; align-items: center; padding: 0 0 8px 15px; }
.bookmarks a { display: flex; align-items: center; gap: 7.5px; white-space: nowrap; }
.bookmarks a:nth-child(8) { letter-spacing: -.05px; }
.bookmarks a:nth-child(5) { letter-spacing: -.2px; }
.bookmarks a:last-child { gap: 10px; }
.bsep { width: 2px; height: 20px; background: #636363; }

/* application */
.app { height: 869px; flex: none; display: flex; background: #fff; }
.sidebar { width: 350px; border-right: 1px solid #e2e2e2; background: #fff; display: flex; flex-direction: column; z-index: 1; color: #1e1e2d; }
.logo { margin: 36px 0 0 128px; height: 17px; display: flex; align-items: center; gap: 1px; }
.logo b { font: 700 9px/8px "Open Sans", sans-serif; letter-spacing: .42px; color: #06303a; margin-top: -1px; }
.menu { list-style: none; margin: 21px 0 0; padding: 0; flex: 1; }
.menu li { height: 55px; display: flex; align-items: center; gap: 9px; padding: 0 0 4px 22px; position: relative; font-family: "Noto Sans", sans-serif; letter-spacing: -.04px; }
.menu li:last-child { letter-spacing: .1px; }
.menu li svg { margin-top: 2px; }
.menu .current { background: linear-gradient(90deg, #dcefe2, #fff 300px) 0 1px no-repeat; }
.menu .current::before { content: ""; position: absolute; left: 0; top: 7px; width: 4px; height: 40px; border-radius: 0 4px 4px 0; background: #34c364; }
.badge { position: absolute; left: 291px; top: -2px; width: 23px; height: 23px; border-radius: 50%; background: #f2607f; color: #fff; font: 600 11.5px/23px "Open Sans", sans-serif; text-align: center; }
.user { height: 76px; border-top: 1px solid #eeeeee; display: flex; align-items: center; gap: 10px; padding: 0 0 4px 23px; font-size: 15px; letter-spacing: -.07px; }
.user span { padding-bottom: 2px; }
.content { flex: 1; position: relative; padding: 22px 25px 21px; background: #f8f8f8; }
.collapse { position: absolute; left: -3px; top: 37px; z-index: 2; }
.modal { height: 826px; border-radius: 20px; background: #fcfcfc; box-shadow: 0 14px 42px rgba(0,0,0,.18); display: flex; flex-direction: column; color: #4a4c5b; }
.modal-top { height: 63px; padding: 19px 19px 0; display: flex; justify-content: flex-end; }
.close { width: 43px; height: 44px; border-radius: 50%; background: #fbe9ed; display: flex; align-items: center; justify-content: center; padding-bottom: 1px; }
h1 { margin: 0; height: 33px; font-size: 22px; line-height: 33px; font-weight: 500; letter-spacing: .1px; text-align: center; color: #30323f; }
.scroll { flex: 1; overflow: hidden; padding: 0 19px; font-size: 19px; line-height: 30px; letter-spacing: -.06px; border-radius: 0 0 20px 20px; }
.card { width: 1315px; height: 87px; border: 1px solid #e6e6ea; border-radius: 7px; display: flex; padding: 7px 0 0 12.500px; margin-bottom: 13px; }
.card.tall { height: 117px; padding-top: 8px; }
.card.cut { height: 117px; margin: -99px 0 12px; align-items: flex-end; padding: 0 0 10px 48px; }
.no { width: 29.500px; }
.card h2 { margin: 0 0 12px; font-size: 19.2px; line-height: 30px; font-weight: 700; letter-spacing: -.16px; color: #3a3c4b; }
.card h2.wide { letter-spacing: .16px; }
.card p { margin: 0; }
.card div svg { margin: 2px 0 0 6px; }
.due { display: flex; align-items: center; height: 48px; padding-top: 6px; gap: 25px; }
.file { width: 1315px; height: 44px; border: 1px solid #47b36c; border-radius: 7px; display: flex; align-items: center; padding-left: 16px; }
.file span { margin-left: 16px; padding-top: 1px; letter-spacing: -.18px; }
.rm { margin-left: 20px; }
.lab { display: block; margin: 17px 0 0 6px; font-size: 17px; line-height: 26px; font-weight: 600; color: #7e8299; letter-spacing: 0; }
.area { width: 1315px; height: 250px; border: 1px solid #e6e6ea; border-radius: 8px; padding: 15px 17px; font: 15px/22px Inter, sans-serif; color: #858a9f; letter-spacing: 0; }
.actions { width: 1482px; display: flex; justify-content: flex-end; padding-top: 22px; }
.submit { width: 116px; height: 44px; border-radius: 8px; background: #47ad6b; }
.toast { position: absolute; left: 1155px; top: 744px; width: 390px; height: 80px; border-radius: 4px; background: #fff; box-shadow: 0 1px 10px rgba(0,0,0,.1), 0 2px 15px rgba(0,0,0,.06); display: flex; align-items: center; padding-left: 18px; gap: 12px; font: 20px/24px "Liberation Sans", Arial, sans-serif; letter-spacing: 0; color: #757575; }
.tclose { position: absolute; right: 13px; top: 14px; }

/* taskbar */
.taskbar { height: 60px; flex: none; position: relative; z-index: 3; background: #202020; border-top: 1px solid #4a4c4b; display: flex; color: #fff; }
.weather { width: 503px; display: flex; padding: 9px 0 0 25px; gap: 9px; }
.weather svg { margin-top: 6px; }
.weather small { display: block; font-size: 14.5px; color: #cfcfcf; letter-spacing: 0; }
.apps { display: flex; align-items: center; flex: 1; padding-bottom: 1px; background: radial-gradient(4px 2px, #9a9a9a 90%, transparent) 677px 49px / 8px 4px no-repeat, radial-gradient(4px 2px, #9a9a9a 90%, transparent) 732px 49px / 8px 4px no-repeat, radial-gradient(4px 2px, #9a9a9a 90%, transparent) 897px 49px / 8px 4px no-repeat; }
.search { margin-left: 16px; width: 275px; height: 40px; border-radius: 20px; background: #404040; border: 1px solid #565656; display: flex; align-items: center; padding: 0 2px 0 14px; color: #d8d8d8; font-size: 16.5px; }
.search span { flex: 1; margin-left: 11px; }
.mount { margin-top: 7px; }
.a-tv { margin-left: 16px; }
.a-figma { margin-left: 25px; width: 30px; height: 30px; border-radius: 4px; background: #252525; display: flex; align-items: center; justify-content: center; }
.a-edge { margin-left: 25px; }
.a-teams { margin-left: 27px; }
.a-code { margin-left: 26px; }
.a-gh { margin-left: 26px; }
.a-tg { margin-left: 28px; }
.a-exp { margin-left: 26px; }
.a-store { margin-left: 25px; margin-bottom: 1px; }
.a-chrome { position: relative; margin-left: 16px; width: 50px; height: 50px; border-radius: 6px; background: #2e2e2e; border: 1px solid #383838; display: flex; align-items: center; justify-content: center; }
.a-chrome b { position: absolute; left: 25px; top: 3px; width: 20px; height: 20px; border-radius: 50%; background: #7e57c2; color: #ddd; font: 500 12px/20px Roboto, sans-serif; text-align: center; }
.a-chrome::after { content: ""; position: absolute; left: 14px; bottom: 0; width: 20px; height: 4px; border-radius: 2px; background: #4cc2ff; }
.a-pp { margin-left: 15px; }
.tray { display: flex; align-items: center; width: 366px; padding-bottom: 2px; }
.eng { margin-left: 26px; width: 29px; letter-spacing: -.4px; }
.wifi { margin-left: 23px; }
.spk { margin-left: 10px; }
.bat { margin-left: 10px; }
.clock { width: 90px; text-align: right; letter-spacing: 0; }
.bell { margin-left: 11px; }
.copilot { position: relative; margin-left: 22px; padding-bottom: 2px; }
.copilot b { position: absolute; left: 7px; bottom: -2px; width: 23px; height: 9px; border-radius: 2px; background: #fcc419; color: #222; font: 700 8px/9px "Open Sans", sans-serif; letter-spacing: .4px; text-align: center; }
```
